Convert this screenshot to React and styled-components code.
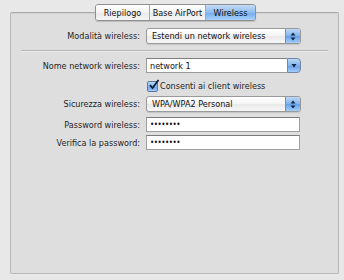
import React from "react";
import styled, { createGlobalStyle } from "styled-components";

const GlobalStyle = createGlobalStyle`
  html, body {
    margin: 0;
    padding: 0;
    background: #e8e8e8;
  }
  body {
    font-family: "DejaVu Sans Condensed", "Liberation Sans", sans-serif;
    font-size: 9px;
    color: #1e1e1e;
  }
`;

const Window = styled.div`
  width: 344px;
  height: 280px;
  box-sizing: border-box;
  padding: 12px 5px 6px 10px;
  background: #e8e8e8;
  display: flex;
`;

const Panel = styled.div`
  flex: 1;
  display: flex;
  flex-direction: column;
  background: #dedede;
  border: 1px solid #b8b8b8;
  border-top-color: #a9a9a9;
  border-radius: 2px;
  box-shadow: inset 0 1px 0 #d2d2d2;
`;

const TabBar = styled.div`
  align-self: center;
  display: flex;
  margin: -9px 0 0 2px;
  height: 17px;
  box-sizing: border-box;
  border: 1px solid #8f8f8f;
  border-radius: 3px;
  overflow: hidden;
  box-shadow: 0 1px 1px rgba(0, 0, 0, 0.15);
`;

const Tab = styled.div`
  display: flex;
  align-items: center;
  justify-content: center;
  width: ${(p) => p.$w}px;
  color: #111;
  background: ${(p) =>
    p.$active
      ? "linear-gradient(#c4dcf7 0%, #8fbdf0 50%, #72abec 51%, #a9d0fa 100%)"
      : "linear-gradient(#ffffff 0%, #f3f3f3 50%, #e8e8e8 51%, #f6f6f6 100%)"};
  border-left: ${(p) => (p.$first ? "none" : "1px solid #a8a8a8")};
`;

const Form = styled.div`
  display: flex;
  flex-direction: column;
  margin-top: 7px;
`;

const Row = styled.div`
  display: grid;
  grid-template-columns: 129px 155px;
  column-gap: 6px;
  align-items: center;
  height: ${(p) => p.$h}px;
  margin-top: ${(p) => p.$mt || 0}px;
`;

const Label = styled.div`
  text-align: right;
  white-space: nowrap;
  color: #1e1e1e;
`;

const Separator = styled.div`
  height: 1px;
  background: #b3b3b3;
  border-bottom: 1px solid #ececec;
  margin: 6px 10px 0 10px;
`;

const Popup = styled.div`
  height: 16px;
  box-sizing: border-box;
  display: flex;
  border: 1px solid #9a9a9a;
  border-radius: 3px;
  overflow: hidden;
  background: linear-gradient(#ffffff 0%, #f4f4f4 50%, #e9e9e9 51%, #f7f7f7 100%);
  box-shadow: 0 1px 1px rgba(0, 0, 0, 0.12);
`;

const PopupText = styled.div`
  flex: 1;
  padding-left: 5px;
  display: flex;
  align-items: center;
  white-space: nowrap;
  color: #111;
`;

const BlueButton = styled.div`
  width: 14px;
  display: flex;
  align-items: center;
  justify-content: center;
  background: linear-gradient(#bcd8f7 0%, #82b3ec 50%, #659fe6 51%, #a4cdf9 100%);
  border-left: 1px solid #7a8fb0;
`;

const Combo = styled.div`
  height: 15px;
  display: flex;
  align-items: stretch;
`;

const ComboField = styled.div`
  flex: 1;
  box-sizing: border-box;
  background: #fff;
  border: 1px solid #9b9b9b;
  border-top-color: #7e7e7e;
  border-right: none;
  padding-left: 3px;
  display: flex;
  align-items: center;
  color: #111;
`;

const ComboButton = styled.div`
  width: 14px;
  box-sizing: border-box;
  border: 1px solid #7386a8;
  border-radius: 0 4px 4px 0;
  display: flex;
  align-items: center;
  justify-content: center;
  background: linear-gradient(#bcd8f7 0%, #82b3ec 50%, #659fe6 51%, #a4cdf9 100%);
`;

const TextField = styled.div`
  height: 15px;
  width: 154px;
  box-sizing: border-box;
  background: #fff;
  border: 1px solid #a0a0a0;
  border-top-color: #7c7c7c;
  padding-left: 3px;
  display: flex;
  align-items: center;
  font-size: 8px;
  letter-spacing: -0.5px;
  color: #111;
`;

const CheckWrap = styled.div`
  grid-column: 2;
  display: flex;
  align-items: center;
  gap: 2px;
  padding-left: 1px;
  white-space: nowrap;
`;

const CheckBox = styled.div`
  width: 11px;
  height: 11px;
  box-sizing: border-box;
  border: 1px solid #5a78a6;
  border-radius: 2px;
  background: linear-gradient(#bcd8f7 0%, #82b3ec 50%, #659fe6 51%, #a4cdf9 100%);
  position: relative;
`;

const Arrows = () => (
  <svg width="6" height="9" viewBox="0 0 6 9">
    <path d="M3 0.5 L5.5 3.5 H0.5 Z" fill="#10264a" />
    <path d="M3 8.5 L5.5 5.5 H0.5 Z" fill="#10264a" />
  </svg>
);

const DownArrow = () => (
  <svg width="6" height="5" viewBox="0 0 6 5">
    <path d="M0.5 1 H5.5 L3 4.5 Z" fill="#10264a" />
  </svg>
);

const Check = () => (
  <svg
    width="12"
    height="12"
    viewBox="0 0 12 12"
    style={{ position: "absolute", left: 0, top: -3 }}
  >
    <path
      d="M2 6 L4.5 9 L10.5 1"
      stroke="#0e1f3d"
      strokeWidth="1.8"
      fill="none"
    />
  </svg>
);

const PopupButton = ({ children }) => (
  <Popup>
    <PopupText>{children}</PopupText>
    <BlueButton>
      <Arrows />
    </BlueButton>
  </Popup>
);

export default function App() {
  return (
    <>
      <GlobalStyle />
      <Window>
        <Panel>
          <TabBar>
            <Tab $first $w={53}>Riepilogo</Tab>
            <Tab $w={55}>Base AirPort</Tab>
            <Tab $active $w={49}>Wireless</Tab>
          </TabBar>
          <Form>
            <Row $h={16}>
              <Label>Modalità wireless:</Label>
              <PopupButton>Estendi un network wireless</PopupButton>
            </Row>
            <Separator />
            <Row $h={15} $mt={6}>
              <Label>Nome network wireless:</Label>
              <Combo>
                <ComboField>network 1</ComboField>
                <ComboButton>
                  <DownArrow />
                </ComboButton>
              </Combo>
            </Row>
            <Row $h={14} $mt={6}>
              <CheckWrap>
                <CheckBox>
                  <Check />
                </CheckBox>
                Consenti ai client wireless
              </CheckWrap>
            </Row>
            <Row $h={16} $mt={3}>
              <Label>Sicurezza wireless:</Label>
              <PopupButton>WPA/WPA2 Personal</PopupButton>
            </Row>
            <Row $h={15} $mt={5}>
              <Label>Password wireless:</Label>
              <TextField>••••••••</TextField>
            </Row>
            <Row $h={15} $mt={3}>
              <Label>Verifica la password:</Label>
              <TextField>••••••••</TextField>
            </Row>
          </Form>
        </Panel>
      </Window>
    </>
  );
}
